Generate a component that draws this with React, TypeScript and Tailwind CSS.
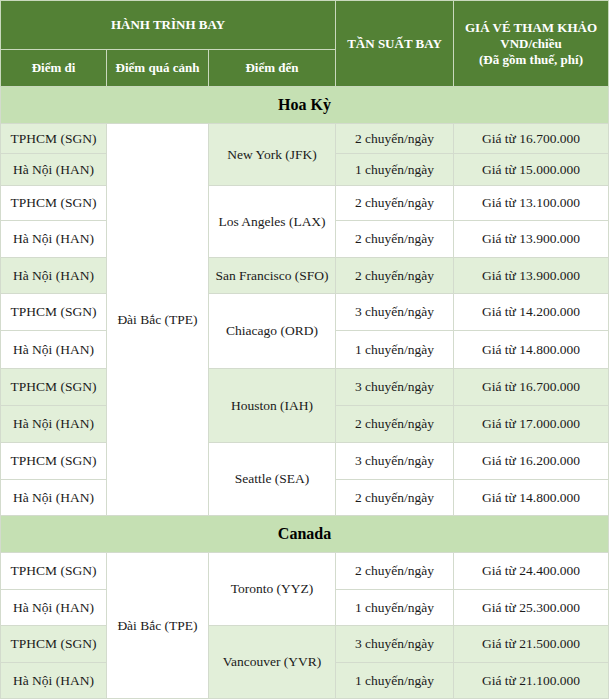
import React from "react";

type Row = { from: string; freq: string; price: string; h: string };
type Group = { dest: string; green: boolean; rows: Row[] };
type Region = { name: string; groups: Group[] };

const regions: Region[] = [
  {
    name: "Hoa Kỳ",
    groups: [
      {
        dest: "New York (JFK)",
        green: true,
        rows: [
          { from: "TPHCM (SGN)", freq: "2 chuyến/ngày", price: "Giá từ 16.700.000", h: "h-[30px]" },
          { from: "Hà Nội (HAN)", freq: "1 chuyến/ngày", price: "Giá từ 15.000.000", h: "h-[32px]" },
        ],
      },
      {
        dest: "Los Angeles (LAX)",
        green: false,
        rows: [
          { from: "TPHCM (SGN)", freq: "2 chuyến/ngày", price: "Giá từ 13.100.000", h: "h-[35px]" },
          { from: "Hà Nội (HAN)", freq: "2 chuyến/ngày", price: "Giá từ 13.900.000", h: "h-[37px]" },
        ],
      },
      {
        dest: "San Francisco (SFO)",
        green: true,
        rows: [
          { from: "Hà Nội (HAN)", freq: "2 chuyến/ngày", price: "Giá từ 13.900.000", h: "h-[36px]" },
        ],
      },
      {
        dest: "Chiacago (ORD)",
        green: false,
        rows: [
          { from: "TPHCM (SGN)", freq: "3 chuyến/ngày", price: "Giá từ 14.200.000", h: "h-[37px]" },
          { from: "Hà Nội (HAN)", freq: "1 chuyến/ngày", price: "Giá từ 14.800.000", h: "h-[38px]" },
        ],
      },
      {
        dest: "Houston (IAH)",
        green: true,
        rows: [
          { from: "TPHCM (SGN)", freq: "3 chuyến/ngày", price: "Giá từ 16.700.000", h: "h-[37px]" },
          { from: "Hà Nội (HAN)", freq: "2 chuyến/ngày", price: "Giá từ 17.000.000", h: "h-[37px]" },
        ],
      },
      {
        dest: "Seattle (SEA)",
        green: false,
        rows: [
          { from: "TPHCM (SGN)", freq: "3 chuyến/ngày", price: "Giá từ 16.200.000", h: "h-[37px]" },
          { from: "Hà Nội (HAN)", freq: "2 chuyến/ngày", price: "Giá từ 14.800.000", h: "h-[36px]" },
        ],
      },
    ],
  },
  {
    name: "Canada",
    groups: [
      {
        dest: "Toronto (YYZ)",
        green: false,
        rows: [
          { from: "TPHCM (SGN)", freq: "2 chuyến/ngày", price: "Giá từ 24.400.000", h: "h-[37px]" },
          { from: "Hà Nội (HAN)", freq: "1 chuyến/ngày", price: "Giá từ 25.300.000", h: "h-[36px]" },
        ],
      },
      {
        dest: "Vancouver (YVR)",
        green: true,
        rows: [
          { from: "TPHCM (SGN)", freq: "3 chuyến/ngày", price: "Giá từ 21.500.000", h: "h-[37px]" },
          { from: "Hà Nội (HAN)", freq: "1 chuyến/ngày", price: "Giá từ 21.100.000", h: "h-[36px]" },
        ],
      },
    ],
  },
];

const th = "border border-[#c9d9bd] bg-[#538135] text-white font-bold text-[13px] text-center align-middle";
const td = "border border-[#d3dbcd] text-center align-middle px-1";

const RegionRows = ({ region }: { region: Region }) => {
  const total = region.groups.reduce((n, g) => n + g.rows.length, 0);
  let first = true;

  return (
    <>
      <tr className="h-[37px] bg-[#c5e0b3]">
        <td colSpan={5} className="border border-[#d3dbcd] text-center align-middle text-[16px] font-bold text-black">
          {region.name}
        </td>
      </tr>
      {region.groups.map((g) =>
        g.rows.map((r, i) => {
          const bg = g.green ? "bg-[#e2efd9]" : "bg-white";
          const showTransit = first;
          first = false;
          return (
            <tr key={g.dest + i} className={r.h}>
              <td className={`${td} ${bg}`}>{r.from}</td>
              {showTransit && (
                <td rowSpan={total} className={`${td} bg-white`}>
                  Đài Bắc (TPE)
                </td>
              )}
              {i === 0 && (
                <td rowSpan={g.rows.length} className={`${td} ${bg}`}>
                  {g.dest}
                </td>
              )}
              <td className={`${td} ${bg}`}>{r.freq}</td>
              <td className={`${td} ${bg}`}>{r.price}</td>
            </tr>
          );
        })
      )}
    </>
  );
};

export default function App() {
  return (
    <div className="w-[611px] h-[700px] bg-white overflow-hidden font-['Liberation_Serif',serif] text-[13.5px] text-[#1a1a1a]">
      <table className="w-[608px] table-fixed border-collapse leading-[16px]">
        <colgroup>
          <col className="w-[106px]" />
          <col className="w-[102px]" />
          <col className="w-[127px]" />
          <col className="w-[118px]" />
          <col className="w-[155px]" />
        </colgroup>
        <thead>
          <tr className="h-[49px]">
            <th colSpan={3} className={th}>
              HÀNH TRÌNH BAY
            </th>
            <th rowSpan={2} className={th}>
              TẦN SUẤT BAY
            </th>
            <th rowSpan={2} className={th}>
              GIÁ VÉ THAM KHẢO
              <br />
              VND/chiều
              <br />
              (Đã gồm thuế, phí)
            </th>
          </tr>
          <tr className="h-[37px]">
            <th className={th}>Điểm đi</th>
            <th className={th}>Điểm quá cảnh</th>
            <th className={th}>Điểm đến</th>
          </tr>
        </thead>
        <tbody>
          {regions.map((r) => (
            <RegionRows key={r.name} region={r} />
          ))}
        </tbody>
      </table>
    </div>
  );
}
